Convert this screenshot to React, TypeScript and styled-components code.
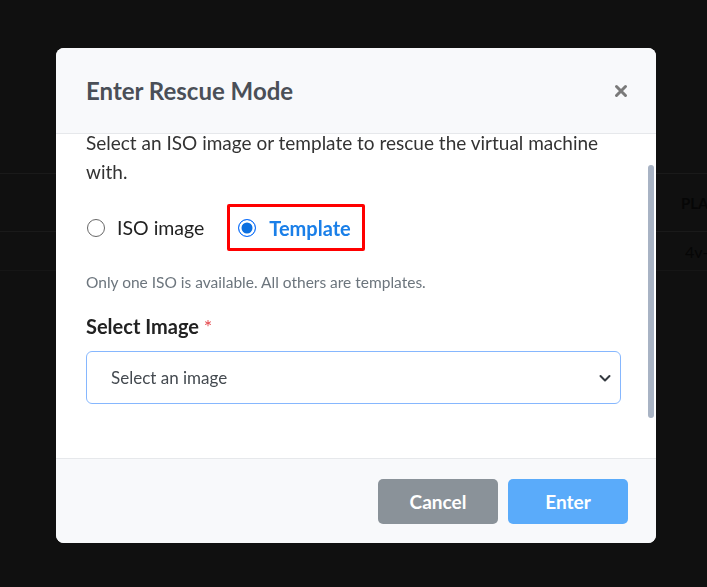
import { useEffect, useRef } from 'react';
import styled, { createGlobalStyle } from 'styled-components';

const GlobalStyle = createGlobalStyle`
    html, body {
        margin: 0;
        padding: 0;
        background: #101010;
        font-family: Lato, "Open Sans", sans-serif;
    }
`;

function App() {
    const bodyRef = useRef<HTMLDivElement>(null);

    useEffect(() => {
        if (bodyRef.current) bodyRef.current.scrollTop = 30;
    }, []);

    return (
        <>
            <GlobalStyle />
            <Page>
                <BackTable>
                    <BackHeadRow><BackCell>PLAN</BackCell></BackHeadRow>
                    <BackRow><BackCell $inset>4v-8g</BackCell></BackRow>
                </BackTable>
            </Page>
            <Backdrop>
                <Modal>
                    <Header>
                        <Title>Enter Rescue Mode</Title>
                        <CloseButton aria-label="close">
                            <svg width="14" height="14" viewBox="0 0 14 14">
                                <path d="M2.5 2.5 L11.5 11.5 M11.5 2.5 L2.5 11.5" stroke="#7a7a7a" strokeWidth="3" strokeLinecap="round" />
                            </svg>
                        </CloseButton>
                    </Header>
                    <BodyWrap>
                        <Body ref={bodyRef}>
                            <Intro>Select an ISO image or template to rescue the virtual machine with.</Intro>
                            <RadioRow>
                                <RadioOption>
                                    <RadioCircle />
                                    <RadioLabel>ISO image</RadioLabel>
                                </RadioOption>
                                <RadioOption $highlight>
                                    <RadioCircle $checked />
                                    <RadioLabel $checked>Template</RadioLabel>
                                </RadioOption>
                            </RadioRow>
                            <Hint>Only one ISO is available. All others are templates.</Hint>
                            <FieldLabel>Select Image <Required>*</Required></FieldLabel>
                            <SelectBox>
                                <span>Select an image</span>
                                <svg width="14" height="14" viewBox="0 0 14 14">
                                    <path d="M2.5 5 L7 9.5 L11.5 5" fill="none" stroke="#343a40" strokeWidth="2" strokeLinecap="round" strokeLinejoin="round" />
                                </svg>
                            </SelectBox>
                        </Body>
                        <ScrollThumb />
                    </BodyWrap>
                    <Footer>
                        <Button $variant="secondary">Cancel</Button>
                        <Button $variant="primary">Enter</Button>
                    </Footer>
                </Modal>
            </Backdrop>
        </>
    );
}

export default App;

const Page = styled.div`
    width: 707px;
    height: 587px;
    overflow: hidden;
    padding-top: 173px;
    box-sizing: border-box;
`;

const BackTable = styled.div`
    display: flex;
    flex-direction: column;
`;

const BackHeadRow = styled.div`
    display: flex;
    justify-content: flex-end;
    align-items: center;
    height: 57px;
    border-top: 1px solid #1a1a1a;
    border-bottom: 1px solid #1a1a1a;
    font-weight: 700;
    font-size: 15px;
`;

const BackRow = styled.div`
    display: flex;
    justify-content: flex-end;
    align-items: center;
    height: 38px;
    border-bottom: 1px solid #161616;
    font-size: 16px;
`;

const BackCell = styled.span<{ $inset?: boolean }>`
    width: ${({ $inset }) => ($inset ? '22px' : '26px')};
    overflow: hidden;
    white-space: nowrap;
    color: #060606;
`;

const Backdrop = styled.div`
    position: fixed;
    inset: 0;
    display: flex;
    align-items: flex-start;
    justify-content: flex-start;
    padding: 48px 0 0 56px;
`;

const Modal = styled.div`
    width: 600px;
    height: 495px;
    display: flex;
    flex-direction: column;
    background: #ffffff;
    border-radius: 8px;
    overflow: hidden;
`;

const Header = styled.div`
    display: flex;
    align-items: center;
    justify-content: space-between;
    height: 85px;
    padding: 0 28px 0 30px;
    background: #f8f9fb;
    border-bottom: 1px solid #e6e8eb;
    flex-shrink: 0;
`;

const Title = styled.h2`
    margin: 0;
    font-size: 24px;
    font-weight: 700;
    color: #4a4f57;
`;

const CloseButton = styled.button`
    display: flex;
    align-items: center;
    justify-content: center;
    padding: 0;
    background: none;
    border: none;
`;

const BodyWrap = styled.div`
    position: relative;
    flex: 1;
    min-height: 0;
    display: flex;
`;

const Body = styled.div`
    flex: 1;
    overflow-y: auto;
    scrollbar-width: none;
    padding: 24px 40px 95px 30px;

    &::-webkit-scrollbar {
        display: none;
    }
`;

const ScrollThumb = styled.div`
    position: absolute;
    top: 31px;
    right: 2px;
    width: 6px;
    height: 253px;
    border-radius: 3px;
    background: #a8b3c4;
`;

const Intro = styled.p`
    margin: 0;
    font-size: 19px;
    line-height: 29px;
    color: #333333;
`;

const RadioRow = styled.div`
    display: flex;
    align-items: center;
    gap: 23px;
    margin-top: 18px;
`;

const RadioOption = styled.label<{ $highlight?: boolean }>`
    display: flex;
    align-items: center;
    gap: ${({ $highlight }) => ($highlight ? '13px' : '12px')};
    margin-left: ${({ $highlight }) => ($highlight ? '0' : '1px')};
    padding: ${({ $highlight }) => ($highlight ? '9px 11px 8px 8px' : '0')};
    border: ${({ $highlight }) => ($highlight ? '3px solid #ff0000' : 'none')};
    border-radius: 2px;
`;

const RadioCircle = styled.span<{ $checked?: boolean }>`
    width: 18px;
    height: 18px;
    box-sizing: border-box;
    border-radius: 50%;
    border: ${({ $checked }) => ($checked ? '1px solid #0d6efd' : '1.5px solid #666666')};
    background: ${({ $checked }) => ($checked ? '#0b6fe0' : '#ffffff')};
    box-shadow: ${({ $checked }) => ($checked ? 'inset 0 0 0 2.5px #ffffff' : 'none')};
`;

const RadioLabel = styled.span<{ $checked?: boolean }>`
    font-size: ${({ $checked }) => ($checked ? '20px' : '19.5px')};
    line-height: 24px;
    font-weight: ${({ $checked }) => ($checked ? 700 : 400)};
    color: ${({ $checked }) => ($checked ? '#1a7fe8' : '#222222')};
`;

const Hint = styled.p`
    margin: 22px 0 0;
    font-size: 15.5px;
    line-height: 19px;
    color: #6c757d;
`;

const FieldLabel = styled.div`
    margin-top: 22px;
    font-size: 20px;
    line-height: 24px;
    font-weight: 700;
    color: #222222;
`;

const Required = styled.span`
    color: #e5484d;
    font-weight: 400;
`;

const SelectBox = styled.div`
    display: flex;
    align-items: center;
    justify-content: space-between;
    height: 53px;
    box-sizing: border-box;
    margin-top: 13px;
    margin-right: -5px;
    padding: 0 8px 0 24px;
    border: 1px solid #86b7fe;
    border-radius: 6px;
    font-size: 17px;
    color: #444a50;
`;

const Footer = styled.div`
    display: flex;
    justify-content: flex-end;
    align-items: center;
    gap: 10px;
    height: 84px;
    padding: 0 28px;
    background: #f8f9fb;
    border-top: 1px solid #e6e8eb;
    flex-shrink: 0;
`;

const Button = styled.button<{ $variant: 'primary' | 'secondary' }>`
    width: 120px;
    height: 45px;
    border: none;
    border-radius: 5px;
    font-family: Lato, "Open Sans", sans-serif;
    font-size: 19px;
    font-weight: 700;
    color: #ffffff;
    background: ${({ $variant }) => ($variant === 'primary' ? '#5aabfa' : '#8a9299')};
`;
